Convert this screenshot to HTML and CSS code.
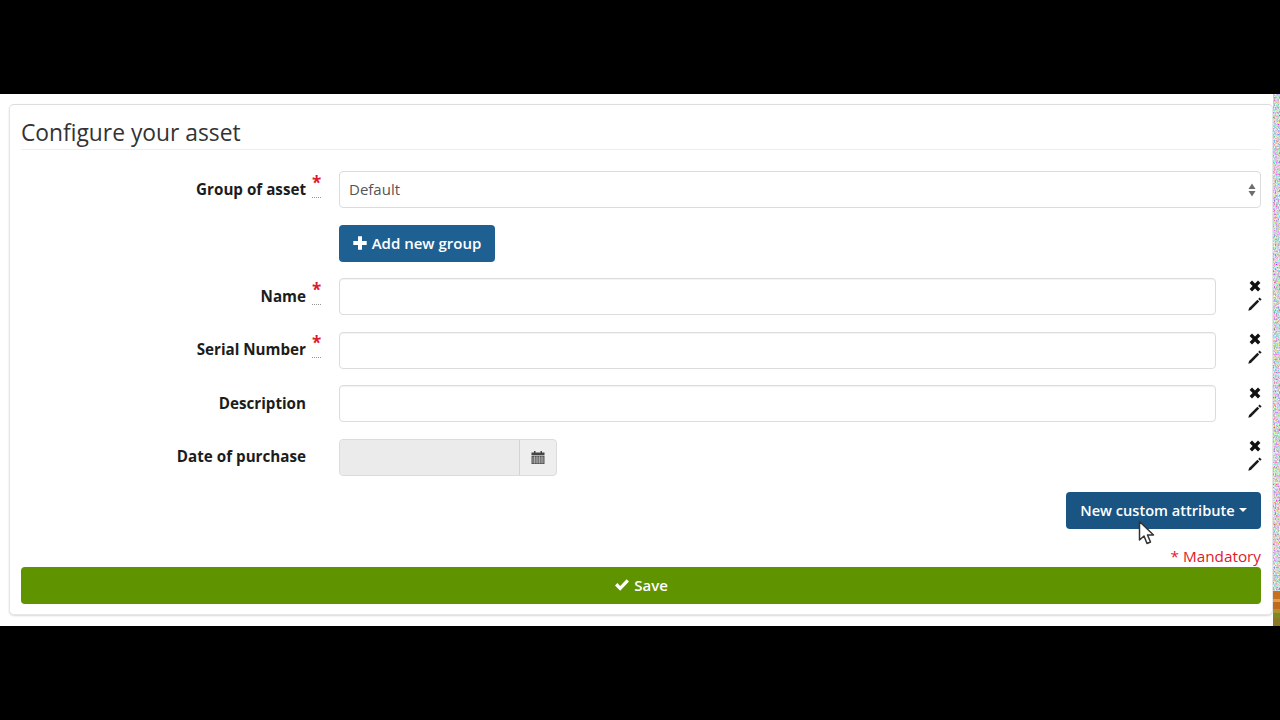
FILE: index.html
```html
<!DOCTYPE html>
<html lang="en">
<head>
    <meta charset="UTF-8">
    <title>Configure your asset</title>
    <link rel="stylesheet" href="styles.css">
</head>
<body>
    <svg class="icon-defs" width="0" height="0">
        <symbol id="icon-remove" viewBox="0 0 12 12">
            <path d="M3 0.6L6 3.6L9 0.6L11.4 3L8.4 6L11.4 9L9 11.4L6 8.4L3 11.4L0.6 9L3.6 6L0.6 3Z" fill="#111"/>
        </symbol>
        <symbol id="icon-pencil" viewBox="0 0 14 14">
            <path d="M0.3 13.7L1.1 11L9.4 2.7L11.2 4.5L2.9 12.9Z" fill="#1a1a1a"/>
            <path d="M10.2 1.9L11.6 0.4L13.6 2.4L12.1 3.8Z" fill="#1a1a1a"/>
        </symbol>
        <filter id="screen-noise" x="0" y="0" width="100%" height="100%">
            <feTurbulence type="fractalNoise" baseFrequency="0.8 0.6" numOctaves="2" seed="7"/>
            <feColorMatrix type="matrix" values="1.7 0 0 0 -0.2  0 1.7 0 0 -0.22  0 0 1.7 0 -0.16  0 0 0 0 1"/>
        </filter>
    </svg>

    <div class="black-bar"></div>

    <div class="stage">
        <main class="panel">
            <h2 class="panel-title">Configure your asset</h2>

            <!-- group of asset -->
            <div class="form-row">
                <label class="row-label">Group of asset<span class="req">*</span></label>
                <div class="select-box">
                    <span class="select-value">Default</span>
                    <svg class="select-arrows" viewBox="0 0 8 14" width="8" height="14">
                        <path d="M4 0.5L7.5 6H0.5Z" fill="#6d6d6d"/>
                        <path d="M4 13.5L0.5 8H7.5Z" fill="#6d6d6d"/>
                    </svg>
                </div>
            </div>
            <div class="form-row">
                <span class="row-label"></span>
                <button class="btn btn-blue">
                    <svg viewBox="0 0 14 14" width="14" height="14"><path d="M5 0.3H9V5H13.7V9H9V13.7H5V9H0.3V5H5Z" fill="#fff"/></svg>
                    Add new group
                </button>
            </div>

            <!-- attributes -->
            <div class="form-row">
                <label class="row-label">Name<span class="req">*</span></label>
                <input class="text-input" type="text">
                <div class="row-tools">
                    <svg class="tool-remove"><use href="#icon-remove"/></svg>
                    <svg class="tool-edit"><use href="#icon-pencil"/></svg>
                </div>
            </div>
            <div class="form-row">
                <label class="row-label">Serial Number<span class="req">*</span></label>
                <input class="text-input" type="text">
                <div class="row-tools">
                    <svg class="tool-remove"><use href="#icon-remove"/></svg>
                    <svg class="tool-edit"><use href="#icon-pencil"/></svg>
                </div>
            </div>
            <div class="form-row">
                <label class="row-label">Description</label>
                <input class="text-input" type="text">
                <div class="row-tools">
                    <svg class="tool-remove"><use href="#icon-remove"/></svg>
                    <svg class="tool-edit"><use href="#icon-pencil"/></svg>
                </div>
            </div>
            <div class="form-row">
                <label class="row-label">Date of purchase</label>
                <div class="date-group">
                    <div class="date-field"></div>
                    <div class="date-addon">
                        <svg viewBox="0 0 14 14" width="14" height="14">
                            <path d="M0.5 2.5H3V1H4.5V2.5H9.5V1H11V2.5H13.5V5H0.5Z" fill="#444"/>
                            <path d="M0.5 5.6H13.5V14H0.5Z" fill="#555"/>
                            <path d="M1 8H13M1 10H13M1 12H13M3.5 6V13.5M6 6V13.5M8.5 6V13.5M11 6V13.5" stroke="#ddd" stroke-width="0.5"/>
                        </svg>
                    </div>
                </div>
                <div class="row-tools">
                    <svg class="tool-remove"><use href="#icon-remove"/></svg>
                    <svg class="tool-edit"><use href="#icon-pencil"/></svg>
                </div>
            </div>

            <div class="custom-row">
                <button class="btn btn-navy">New custom attribute<span class="caret"></span></button>
                <svg class="cursor" viewBox="0 0 18 26" width="18" height="26">
                    <path d="M1.5 1.5V20L6 16L9 23.5L12.5 22L9.5 15H15.5Z" fill="#fff" stroke="#333" stroke-width="1.5" stroke-linejoin="round"/>
                </svg>
            </div>
            <div class="mandatory">* Mandatory</div>

            <button class="btn btn-save">
                <svg viewBox="0 0 16 14" width="16" height="14"><path d="M1 7.5L3.4 5.1L6.2 7.9L12.6 1.2L15 3.6L6.2 12.8Z" fill="#fff"/></svg>
                Save
            </button>
        </main>

        <!-- right edge of the captured screen -->
        <svg class="noise-strip" width="7" height="532">
            <rect width="7" height="532" filter="url(#screen-noise)"/>
            <rect y="497" width="7" height="8" fill="#c9701c"/>
            <rect y="505" width="7" height="3" fill="#d8a050"/>
            <rect y="508" width="7" height="7" fill="#c06a1c"/>
            <rect y="515" width="7" height="4" fill="#b09030"/>
            <rect y="519" width="7" height="5" fill="#7c8a24"/>
            <rect y="524" width="7" height="8" fill="#8a7a28"/>
        </svg>
    </div>

    <div class="black-bar"></div>
</body>
</html>
```

FILE: styles.css
```css
:root {
    --blue: #1f6093;
    --navy: #195482;
    --green: #5f9400;
    --border: #dcdcdc;
    --req: #e0192d;
}

body {
    margin: 0;
    height: 720px;
    overflow: hidden;
    display: flex;
    flex-direction: column;
    background: #000;
    font-family: "Open Sans", "Noto Sans", sans-serif;
    font-size: 15px;
    color: #222;
}

.icon-defs {
    position: absolute;
}

.black-bar {
    height: 94px;
    background: #000;
}

.stage {
    height: 532px;
    display: flex;
    background: #fff;
    padding-left: 9px;
    box-sizing: border-box;
}

/* panel */
.panel {
    width: 1264px;
    height: 511px;
    margin-top: 10px;
    box-sizing: border-box;
    padding: 0 11px;
    border: 1px solid #e6e6e6;
    border-top-color: #ddd;
    border-radius: 5px;
    box-shadow: 0 1px 2px rgba(0, 0, 0, 0.15);
    background: #fff;
}

.panel-title {
    margin: 0 0 21px 0;
    height: 44px;
    line-height: 55px;
    font-size: 22.8px;
    font-weight: 400;
    color: #333;
    border-bottom: 1px solid #eeeeee;
}

.form-row {
    display: flex;
    align-items: center;
    height: 37px;
    margin-bottom: 16.5px;
}

.row-label {
    position: relative;
    width: 285px;
    margin-right: 33px;
    margin-bottom: 2px;
    flex: none;
    text-align: right;
    font-weight: 700;
    font-size: 15.2px;
    color: #1c1c1c;
}

.req {
    position: absolute;
    left: 291px;
    top: -6px;
    color: var(--req);
    font-size: 17px;
    font-weight: 700;
    line-height: 20px;
}

.req::after {
    content: '';
    position: absolute;
    left: 0;
    top: 24px;
    width: 9px;
    border-bottom: 1px dotted #999;
}

.select-box {
    width: 922px;
    height: 37px;
    box-sizing: border-box;
    display: flex;
    align-items: center;
    justify-content: space-between;
    padding: 0 4px 0 9px;
    border: 1px solid var(--border);
    border-radius: 4px;
    color: #555;
    background: #fff;
}

.select-value {
    margin-bottom: 2px;
}

.text-input {
    width: 877px;
    height: 37px;
    box-sizing: border-box;
    padding: 0;
    border: 1px solid var(--border);
    border-radius: 4px;
    box-shadow: inset 0 1px 1px rgba(0, 0, 0, 0.05);
    background: #fff;
}

.row-tools {
    margin-left: auto;
    width: 12px;
    display: flex;
    flex-direction: column;
    gap: 5px;
    transform: translateY(-2px);
}

.row-tools svg {
    display: block;
}

.tool-remove {
    width: 12px;
    height: 12px;
}

.tool-edit {
    width: 14px;
    height: 14px;
    margin: 0 -1px -1px;
}

.date-group {
    display: flex;
    width: 218px;
    height: 37px;
    box-sizing: border-box;
    border: 1px solid var(--border);
    border-radius: 4px;
    background: #eeeeee;
}

.date-field {
    width: 179px;
    border-right: 1px solid #d4d4d4;
    background: #ebebeb;
    border-radius: 3px 0 0 3px;
}

.date-addon {
    flex: 1;
    display: flex;
    align-items: center;
    justify-content: center;
}

.btn {
    border: none;
    border-radius: 4px;
    height: 37px;
    padding: 0;
    font-family: inherit;
    font-size: 15px;
    font-weight: 600;
    color: #fff;
    display: flex;
    align-items: center;
    justify-content: center;
}

.btn-blue {
    width: 156px;
    gap: 5px;
    background: var(--blue);
}

.btn-navy {
    width: 195px;
    padding-bottom: 2px;
    font-size: 14.6px;
    background: var(--navy);
}

.caret {
    margin-left: 4px;
    border-top: 4px solid #fff;
    border-left: 4.5px solid transparent;
    border-right: 4.5px solid transparent;
}

.custom-row {
    position: relative;
    display: flex;
    justify-content: flex-end;
    height: 37px;
}

.cursor {
    position: absolute;
    left: 1117px;
    top: 28px;
}

.mandatory {
    height: 38px;
    line-height: 54px;
    text-align: right;
    color: var(--req);
    font-size: 15.3px;
}

.btn-save {
    width: 100%;
    gap: 4px;
    padding-bottom: 2px;
    background: var(--green);
}

.noise-strip {
    display: block;
    flex: none;
}
```
